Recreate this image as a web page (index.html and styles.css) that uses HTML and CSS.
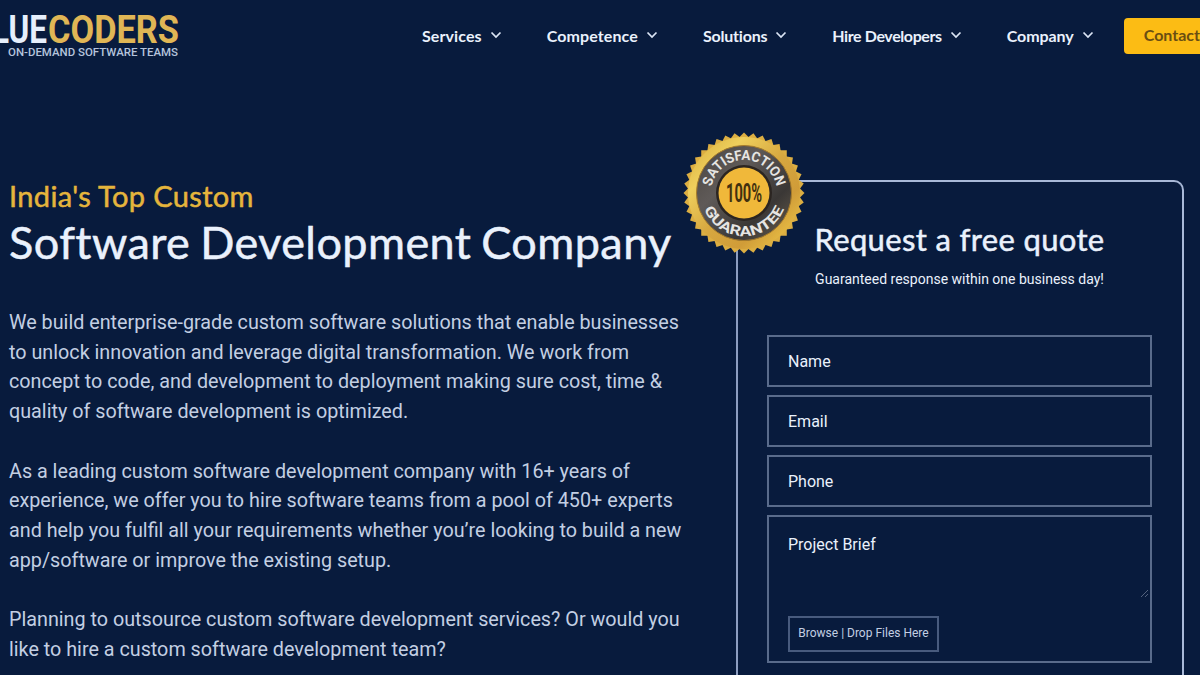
FILE: index.html
```html
<!DOCTYPE html>
<html lang="en">
<head>
<meta charset="utf-8">
<title>Bluecoders - Custom Software Development Company</title>
<link rel="stylesheet" href="styles.css">
</head>
<body>
<header class="site-header">
  <a class="logo" aria-label="Bluecoders">
    <svg width="190" height="60" viewBox="0 0 190 60">
      <text class="logo-name" x="-28" y="42.500" textLength="75" lengthAdjust="spacingAndGlyphs">BLUE</text>
      <text class="logo-name logo-gold" x="48" y="42.500" textLength="131" lengthAdjust="spacingAndGlyphs">CODERS</text>
      <text class="logo-tag" x="8" y="56" textLength="170" lengthAdjust="spacingAndGlyphs">ON-DEMAND SOFTWARE TEAMS</text>
    </svg>
  </a>
  <nav class="main-nav">
    <a class="nav-item"><span>Services</span><svg class="chevron" viewBox="0 0 12 8"><path d="M1.500 1.500 6 6l4.500-4.500"/></svg></a>
    <a class="nav-item"><span>Competence</span><svg class="chevron" viewBox="0 0 12 8"><path d="M1.500 1.500 6 6l4.500-4.500"/></svg></a>
    <a class="nav-item nav-snug"><span>Solutions</span><svg class="chevron" viewBox="0 0 12 8"><path d="M1.500 1.500 6 6l4.500-4.500"/></svg></a>
    <a class="nav-item nav-tight"><span>Hire Developers</span><svg class="chevron" viewBox="0 0 12 8"><path d="M1.500 1.500 6 6l4.500-4.500"/></svg></a>
    <a class="nav-item nav-last"><span>Company</span><svg class="chevron" viewBox="0 0 12 8"><path d="M1.500 1.500 6 6l4.500-4.500"/></svg></a>
  </nav>
  <a class="contact">Contact</a>
</header>
<main class="hero">
  <section class="intro">
    <h1><span class="eyebrow">India's Top Custom</span><span class="headline">Software Development Company</span></h1>
    <p>We build enterprise-grade custom software solutions that enable businesses<br>to unlock innovation and leverage digital transformation. We work from<br>concept to code, and development to deployment making sure cost, time &amp;<br>quality of software development is optimized.</p>
    <p>As a leading custom software development company with 16+ years of<br>experience, we offer you to hire software teams from a pool of 450+ experts<br>and help you fulfil all your requirements whether you’re looking to build a new<br>app/software or improve the existing setup.</p>
    <p>Planning to outsource custom software development services? Or would you<br>like to hire a custom software development team?</p>
  </section>
  <section class="quote">
    <svg class="badge" viewBox="-61 -61 122 122">
      <defs>
        <linearGradient id="gold" x1="0" y1="0" x2="1" y2="1">
          <stop offset="0" stop-color="#d5a93a"/><stop offset=".25" stop-color="#efcf5c"/><stop offset=".5" stop-color="#d7a840"/><stop offset=".72" stop-color="#d09c38"/><stop offset="1" stop-color="#f6d14c"/>
        </linearGradient>
        <linearGradient id="steel" x1="0" y1="0" x2="1" y2="1">
          <stop offset="0" stop-color="#4a4540"/><stop offset=".35" stop-color="#5f5a58"/><stop offset=".7" stop-color="#3a3735"/><stop offset="1" stop-color="#6b6050"/>
        </linearGradient>
        <path id="arcTop" d="M-33 0A33 33 0 0 1 33 0"/>
        <path id="arcBottom" d="M-43 0A43 43 0 0 0 43 0"/>
        <path id="teeth" d="M0-60.500 60.500 0 0 60.500-60.500 0Z"/>
      </defs>
      <g fill="#dcae42">
        <use href="#teeth"/>
        <use href="#teeth" transform="rotate(9)"/>
        <use href="#teeth" transform="rotate(18)"/>
        <use href="#teeth" transform="rotate(27)"/>
        <use href="#teeth" transform="rotate(36)"/>
        <use href="#teeth" transform="rotate(45)"/>
        <use href="#teeth" transform="rotate(54)"/>
        <use href="#teeth" transform="rotate(63)"/>
        <use href="#teeth" transform="rotate(72)"/>
        <use href="#teeth" transform="rotate(81)"/>
      </g>
      <circle r="56" fill="url(#gold)"/>
      <circle r="47.500" fill="url(#steel)" stroke="#a57a2a"/>
      <circle r="28" fill="#2b2521"/>
      <circle r="25.500" fill="#f0b83a"/>
      <text class="badge-arc"><textPath href="#arcTop" startOffset="50%" text-anchor="middle" textLength="91" lengthAdjust="spacingAndGlyphs">SATISFACTION</textPath></text>
      <text class="badge-arc"><textPath href="#arcBottom" startOffset="50%" text-anchor="middle" textLength="102" lengthAdjust="spacingAndGlyphs">GUARANTEE</textPath></text>
      <text class="badge-mid" x="-18" y="9" textLength="36" lengthAdjust="spacingAndGlyphs">100%</text>
    </svg>
    <h2>Request a free quote</h2>
    <p class="note">Guaranteed response within one business day!</p>
    <form class="fields">
      <div class="field">Name</div>
      <div class="field">Email</div>
      <div class="field">Phone</div>
      <div class="field brief"><span>Project Brief</span><svg class="grip" viewBox="0 0 9 9"><path d="M1 8 8 1M5 8l3-3"/></svg><div class="browse">Browse | Drop Files Here</div></div>
    </form>
  </section>
</main>
</body>
</html>
```
FILE: styles.css
```css
* { box-sizing: border-box; }
body {
  margin: 0;
  width: 1200px;
  height: 675px;
  overflow: hidden;
  background: #081b3d;
  color: #eaf1fc;
  font-family: Lato, "Liberation Sans", sans-serif;
}
.site-header { display: flex; height: 72px; overflow: hidden; }
.logo { width: 422px; flex: none; }
.logo svg { display: block; }
.logo-name { font: 700 38px Roboto, sans-serif; fill: #e6effc; }
.logo-gold { fill: #e0b655; }
.logo-tag { font: 500 10.500px Roboto, sans-serif; fill: #b5c4dc; }
.main-nav { display: flex; gap: 45px; height: 70px; align-items: center; flex: none; }
.nav-item { display: flex; align-items: center; gap: 8px; font-size: 16px; font-weight: 700; letter-spacing: .1px; white-space: nowrap; }
.nav-snug { letter-spacing: -.2px; }
.nav-tight { letter-spacing: -.4px; }
.nav-last { letter-spacing: -.05px; }
.chevron { width: 12px; height: 8px; fill: none; stroke: #dbe5f5; stroke-width: 1.700; }
.contact {
  margin: 18px 0 0 30px;
  width: 90px;
  height: 36px;
  flex: none;
  padding-left: 20px;
  border-radius: 4px;
  background: #fcbc14;
  color: #6a4e12;
  font-size: 16px;
  font-weight: 700;
  line-height: 34px;
}
.hero { display: flex; height: 603px; overflow: hidden; }
.intro { width: 736px; flex: none; padding: 106px 0 0 9px; }
h1, h2 { margin: 0; font-weight: 400; white-space: nowrap; -webkit-text-stroke: .5px currentColor; }
.eyebrow { display: block; color: #e5b53c; font-size: 29px; letter-spacing: .36px; line-height: 36px; }
.headline { display: block; font-size: 45px; letter-spacing: .42px; word-spacing: -2px; line-height: 56px; margin-bottom: 38px; }
.intro p {
  margin: 0 0 29.700px;
  color: #c3cfe3;
  font-family: Roboto, sans-serif;
  font-size: 19.750px;
  line-height: 29.730px;
  white-space: nowrap;
}
.quote {
  position: relative;
  width: 448px;
  height: 495px;
  margin-top: 108px;
  padding: 38px 30px 0 29px;
  border: 2px solid #a9b9d8;
  border-left-color: #8c9dc0;
  border-bottom: 0;
  border-radius: 10px 10px 0 0;
}
.badge { position: absolute; left: -55px; top: -50px; width: 122px; height: 122px; }
.badge-arc { font: 700 14px Roboto, sans-serif; fill: #e6e5e3; }
.badge-mid { font: 700 25px Roboto, sans-serif; fill: #42300f; }
h2 { text-align: center; font-size: 31px; letter-spacing: .35px; line-height: 38px; }
.note { margin: 11px 0 0; text-align: center; font: 14px/20px Roboto, sans-serif; white-space: nowrap; }
.fields { margin-top: 46px; display: grid; gap: 8px; font-family: Roboto, sans-serif; }
.field {
  position: relative;
  height: 52px;
  padding-left: 19px;
  border: 2px solid #596b8b;
  font-size: 16px;
  line-height: 49px;
}
.brief { height: 148px; display: flex; flex-direction: column; justify-content: space-between; padding: 17px 0 9px 19px; line-height: 22px; }
.grip { position: absolute; right: 1px; top: 72px; width: 9px; height: 9px; fill: none; stroke: #53627d; }
.browse { width: 151px; height: 36px; border: 2px solid #485b7e; text-align: center; font-size: 12px; line-height: 31px; color: #c3cfe3; }
```
